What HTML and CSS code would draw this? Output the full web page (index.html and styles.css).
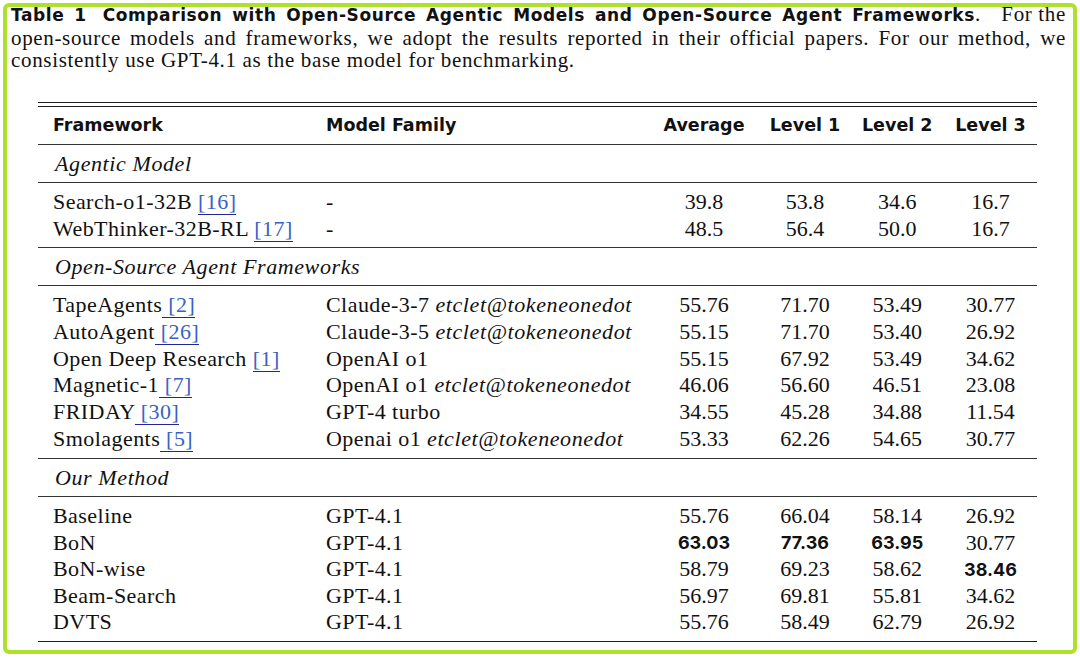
FILE: index.html
```html
<!DOCTYPE html>
<html>
<head>
<meta charset="utf-8">
<link rel="stylesheet" href="styles.css">
</head>
<body>
<div class="frame">
  <div class="caption">
    <p class="cap-line first"><span class="cap-title">Table 1<span class="gap"></span> Comparison with Open-Source Agentic Models and Open-Source Agent Frameworks</span><span class="cap-dot">.</span><span class="cap-tail">For the</span></p>
    <p class="cap-line just">open-source models and frameworks, we adopt the results reported in their official papers. For our method, we</p>
    <p class="cap-line">consistently use GPT-4.1 as the base model for benchmarking.</p>
  </div>
  <div class="table">
    <div class="rule-top"></div>
    <div class="row head">
      <div class="c1">Framework</div>
      <div class="c2">Model Family</div>
      <div class="num">Average</div>
      <div class="num">Level 1</div>
      <div class="num">Level 2</div>
      <div class="num">Level 3</div>
    </div>
    <div class="section">Agentic Model</div>
    <div class="group">
      <div class="row">
        <div class="c1 txt">Search-o1-32B <span class="ref">[16]</span></div>
        <div class="c2 txt">-</div>
        <div class="num">39.8</div><div class="num">53.8</div><div class="num">34.6</div><div class="num">16.7</div>
      </div>
      <div class="row">
        <div class="c1 txt">WebThinker-32B-RL <span class="ref">[17]</span></div>
        <div class="c2 txt">-</div>
        <div class="num">48.5</div><div class="num">56.4</div><div class="num">50.0</div><div class="num">16.7</div>
      </div>
    </div>
    <div class="section">Open-Source Agent Frameworks</div>
    <div class="group">
      <div class="row">
        <div class="c1 txt">TapeAgents<span class="ref"> [2]</span></div>
        <div class="c2 txt">Claude-3-7 <span class="it">etclet@tokeneonedot</span></div>
        <div class="num">55.76</div><div class="num">71.70</div><div class="num">53.49</div><div class="num">30.77</div>
      </div>
      <div class="row">
        <div class="c1 txt">AutoAgent<span class="ref"> [26]</span></div>
        <div class="c2 txt">Claude-3-5 <span class="it">etclet@tokeneonedot</span></div>
        <div class="num">55.15</div><div class="num">71.70</div><div class="num">53.40</div><div class="num">26.92</div>
      </div>
      <div class="row">
        <div class="c1 txt">Open Deep Research <span class="ref">[1]</span></div>
        <div class="c2 txt">OpenAI o1</div>
        <div class="num">55.15</div><div class="num">67.92</div><div class="num">53.49</div><div class="num">34.62</div>
      </div>
      <div class="row">
        <div class="c1 txt">Magnetic-1<span class="ref"> [7]</span></div>
        <div class="c2 txt">OpenAI o1 <span class="it">etclet@tokeneonedot</span></div>
        <div class="num">46.06</div><div class="num">56.60</div><div class="num">46.51</div><div class="num">23.08</div>
      </div>
      <div class="row">
        <div class="c1 txt">FRIDAY<span class="ref"> [30]</span></div>
        <div class="c2 txt">GPT-4 turbo</div>
        <div class="num">34.55</div><div class="num">45.28</div><div class="num">34.88</div><div class="num">11.54</div>
      </div>
      <div class="row">
        <div class="c1 txt">Smolagents<span class="ref"> [5]</span></div>
        <div class="c2 txt">Openai o1 <span class="it">etclet@tokeneonedot</span></div>
        <div class="num">53.33</div><div class="num">62.26</div><div class="num">54.65</div><div class="num">30.77</div>
      </div>
    </div>
    <div class="section">Our Method</div>
    <div class="group last">
      <div class="row">
        <div class="c1 txt">Baseline</div>
        <div class="c2 txt">GPT-4.1</div>
        <div class="num">55.76</div><div class="num">66.04</div><div class="num">58.14</div><div class="num">26.92</div>
      </div>
      <div class="row">
        <div class="c1 txt">BoN</div>
        <div class="c2 txt">GPT-4.1</div>
        <div class="num"><span class="b">63.03</span></div><div class="num"><span class="b">77.36</span></div><div class="num"><span class="b">63.95</span></div><div class="num">30.77</div>
      </div>
      <div class="row">
        <div class="c1 txt">BoN-wise</div>
        <div class="c2 txt">GPT-4.1</div>
        <div class="num">58.79</div><div class="num">69.23</div><div class="num">58.62</div><div class="num"><span class="b">38.46</span></div>
      </div>
      <div class="row">
        <div class="c1 txt">Beam-Search</div>
        <div class="c2 txt">GPT-4.1</div>
        <div class="num">56.97</div><div class="num">69.81</div><div class="num">55.81</div><div class="num">34.62</div>
      </div>
      <div class="row">
        <div class="c1 txt">DVTS</div>
        <div class="c2 txt">GPT-4.1</div>
        <div class="num">55.76</div><div class="num">58.49</div><div class="num">62.79</div><div class="num">26.92</div>
      </div>
    </div>
  </div>
</div>
</body>
</html>
```
FILE: styles.css
```css
html, body {
  margin: 0;
  padding: 0;
  background: #ffffff;
}

.frame {
  margin: 3px 0 0 3px;
  width: 1074px;
  height: 651px;
  box-sizing: border-box;
  border: 4px solid #aee12b;
  border-radius: 6px;
  overflow: hidden;
  background: #ffffff;
  color: #111111;
}

.caption {
  margin: -3.8px 7px 0 4px;
  font-family: "Liberation Serif", serif;
  font-size: 21px;
  line-height: 22.5px;
  letter-spacing: 0.66px;
}

.cap-line {
  margin: 0;
  white-space: nowrap;
}

.cap-line.first {
  display: flex;
  align-items: baseline;
}

.cap-line.just {
  text-align: justify;
  text-align-last: justify;
  white-space: normal;
}

.cap-title {
  width: 964px;
  flex: none;
  white-space: normal;
  text-align: justify;
  text-align-last: justify;
  font-family: "DejaVu Sans", sans-serif;
  font-weight: 700;
  font-size: 17px;
  letter-spacing: 0.6px;
}

.gap {
  display: inline-block;
  width: 6px;
}

.cap-dot {
  flex: none;
}

.cap-tail {
  margin-left: auto;
}

.table {
  margin: 30.3px 0 0 31px;
  width: 999px;
  font-family: "Liberation Serif", serif;
  font-size: 22px;
}

.rule-top {
  height: 3px;
  border-top: 1.5px solid #1e1e1e;
  border-bottom: 1.5px solid #1e1e1e;
}

.row {
  display: grid;
  grid-template-columns: 273.5px 337px 111px 91px 93.5px 93px;
  align-items: center;
  line-height: 26.7px;
  height: 26.7px;
  white-space: nowrap;
}

.c1 {
  padding-left: 15px;
}

.c2 {
  padding-left: 14.5px;
}

.num {
  text-align: center;
}

.txt {
  letter-spacing: 0.45px;
}

.it {
  font-style: italic;
  letter-spacing: 0.6px;
}

.ref {
  color: #3a62c4;
  border-bottom: 1px solid #25259a;
}

.b {
  font-family: "Inter", sans-serif;
  font-weight: 700;
  font-size: 18px;
}

.head {
  height: 37px;
  line-height: 37px;
  border-bottom: 1px solid #333;
  font-family: "DejaVu Sans", sans-serif;
  font-weight: 700;
  font-size: 17.5px;
}

.section {
  height: 37px;
  line-height: 37.5px;
  border-bottom: 1px solid #333;
  padding-left: 17px;
  font-style: italic;
  letter-spacing: 0.6px;
}

.group {
  padding: 6px 0 5px;
  border-bottom: 1px solid #333;
}

.group.last {
  border-bottom: 1.5px solid #1e1e1e;
}
```
